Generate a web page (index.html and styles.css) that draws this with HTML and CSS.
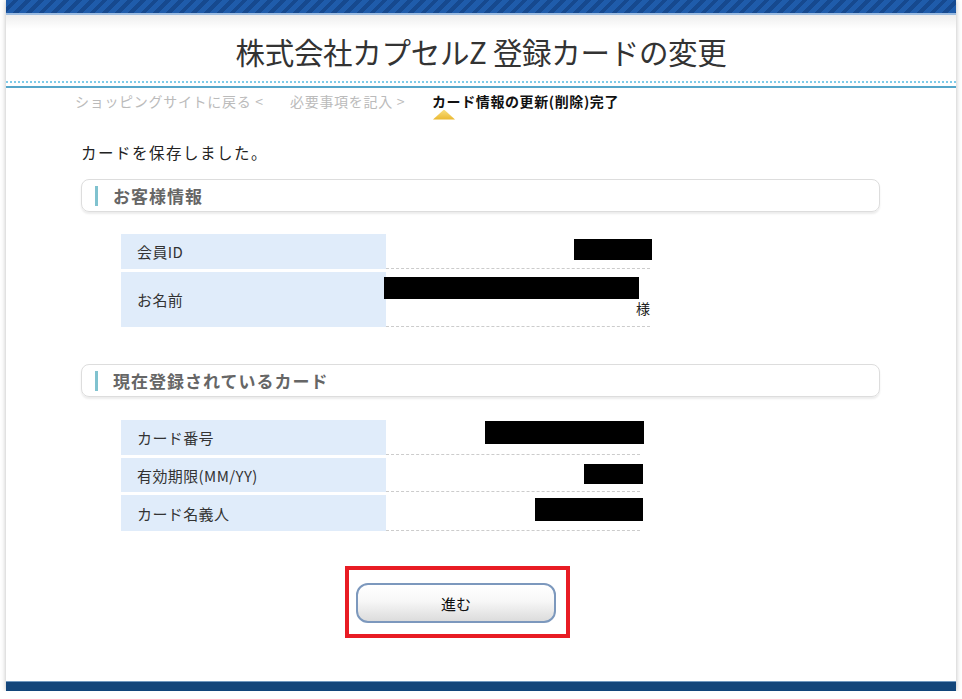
FILE: index.html
```html
<!DOCTYPE html>
<html lang="ja">
<head>
<meta charset="utf-8">
<title>登録カードの変更</title>
<link rel="stylesheet" href="styles.css">
</head>
<body>
<div class="page">
  <div class="stripe"></div>
  <header class="head">
    <h1 class="title">株式会社カプセルZ 登録カードの変更</h1>
  </header>
  <div class="rule-dotted"></div>
  <div class="rule-solid"></div>
  <nav class="crumbs">
    <span class="crumb crumb-1">ショッピングサイトに戻る &lt;</span>
    <span class="crumb crumb-2">必要事項を記入 &gt;</span>
    <span class="crumb crumb-active">カード情報の更新(削除)完了<i class="pointer"></i></span>
  </nav>
  <main class="content">
    <p class="notice">カードを保存しました。</p>

    <h2 class="sec-head"><span class="sec-bar"></span>お客様情報</h2>
    <table class="info info-1">
      <tr class="r-35">
        <th>会員ID</th>
        <td><span class="mask m-id"></span></td>
      </tr>
      <tr class="r-55">
        <th>お名前</th>
        <td class="name-cell"><span class="mask m-name"></span><span class="sama">様</span></td>
      </tr>
    </table>

    <h2 class="sec-head sec-2"><span class="sec-bar"></span>現在登録されているカード</h2>
    <table class="info info-2">
      <tr class="r-35">
        <th>カード番号</th>
        <td><span class="mask m-num"></span></td>
      </tr>
      <tr class="r-34">
        <th>有効期限(MM/YY)</th>
        <td><span class="mask m-exp"></span></td>
      </tr>
      <tr class="r-36">
        <th>カード名義人</th>
        <td><span class="mask m-holder"></span></td>
      </tr>
    </table>

    <div class="highlight">
      <button class="btn" type="button">進む</button>
    </div>
  </main>
  <footer class="foot"></footer>
</div>
</body>
</html>
```

FILE: styles.css
```css
html, body {
  margin: 0;
  padding: 0;
  background: #ffffff;
}

body {
  font-family: "Noto Sans CJK JP", "Noto Sans", "Liberation Sans", sans-serif;
  color: #333333;
}

.page {
  margin: 0 6px;
  height: 691px;
  display: flex;
  flex-direction: column;
  background: #ffffff;
  box-shadow: 0 0 5px rgba(0, 0, 0, 0.28);
  position: relative;
}

.stripe {
  height: 13px;
  background: repeating-linear-gradient(135deg, #1f5cab 0 5px, #16498f 5px 9px);
  border-bottom: 2px solid #9bbbe0;
  flex: none;
}

.head {
  height: 55px;
  background: linear-gradient(#eeeeee, #ffffff 14px);
  text-align: center;
  flex: none;
}

.title {
  margin: 0;
  padding-top: 17px;
  font-size: 29.5px;
  line-height: 38px;
  font-weight: normal;
  color: #333333;
  letter-spacing: -0.3px;
}

.rule-dotted {
  margin-top: 11px;
  height: 0;
  border-top: 2px dotted #7fcbe9;
  flex: none;
}

.rule-solid {
  margin-top: 3px;
  height: 2px;
  background: #55a6c9;
  flex: none;
}

.crumbs {
  display: flex;
  padding-left: 69px;
  height: 23px;
  align-items: center;
  font-size: 14px;
  line-height: 18px;
  flex: none;
  margin-top: 1px;
}

.crumb {
  color: #bbbbbb;
  white-space: nowrap;
  letter-spacing: 0.7px;
}

.crumb-1 { width: 215px; }
.crumb-2 { width: 142px; }

.crumb-active {
  color: #111111;
  font-weight: bold;
  position: relative;
  letter-spacing: 0.6px;
}

.pointer {
  position: absolute;
  left: 1px;
  top: 18px;
  width: 22px;
  height: 10px;
  background: linear-gradient(#f8de7c, #e9b62c);
  clip-path: polygon(50% 0, 100% 100%, 0 100%);
  filter: drop-shadow(0 1px 0 #c9c9c9);
}

.content {
  padding-left: 75px;
  flex: none;
}

.notice {
  margin: 30px 0 0;
  font-size: 15.5px;
  line-height: 20px;
  color: #222222;
  letter-spacing: 1.5px;
}

.sec-head {
  margin: 17px 0 0;
  width: 797px;
  height: 31px;
  border: 1px solid #dddddd;
  border-radius: 8px;
  box-shadow: 0 2px 2px rgba(0, 0, 0, 0.08);
  display: flex;
  align-items: center;
  font-size: 17px;
  font-weight: bold;
  color: #666666;
  letter-spacing: 1px;
  box-sizing: content-box;
}

.sec-bar {
  display: block;
  width: 3px;
  height: 20px;
  background: #80c2cf;
  margin-left: 13px;
  margin-right: 15px;
}

.sec-2 { margin-top: 34px; }

.info {
  margin: 19px 0 0 40px;
  border-collapse: separate;
  border-spacing: 0 3px;
  font-size: 15px;
  color: #333333;
  table-layout: fixed;
}

.info-1 { width: 529px; }
.info-2 { width: 519px; margin-top: 20px; }

.info th {
  width: 249px;
  background: #e0ecfa;
  text-align: left;
  font-weight: normal;
  padding: 0 0 0 16px;
  letter-spacing: 0.4px;
  white-space: nowrap;
}

.info td {
  text-align: right;
  vertical-align: top;
  padding: 0;
  border-bottom: 1px dashed #cccccc;
  white-space: nowrap;
}

.r-35 { height: 35px; }
.r-34 { height: 34px; }
.r-36 { height: 36px; }
.r-55 { height: 55px; }

.mask {
  display: inline-block;
  background: #000000;
  vertical-align: top;
}

.m-id { width: 78px; height: 21px; margin-top: 5px; margin-right: -2px; }
.m-name { width: 255px; height: 22px; margin-top: 5px; }
.m-num { width: 159px; height: 23px; margin-top: 1px; margin-right: -4px; }
.m-exp { width: 59px; height: 20px; margin-top: 6px; margin-right: -3px; }
.m-holder { width: 108px; height: 23px; margin-top: 3px; margin-right: -3px; }

.name-cell .mask {
  display: block;
  margin-left: -2px;
}

.sama {
  display: block;
  font-size: 14px;
  line-height: 16px;
  margin-top: 1px;
  color: #222222;
}

.highlight {
  margin: 32px 0 0 264px;
  width: 210px;
  border: 4px solid #e81c24;
  padding: 13px 0 0 7px;
  box-sizing: content-box;
  height: 51px;
}

.btn {
  width: 200px;
  height: 40px;
  border: 2px solid #7c98bd;
  border-radius: 12px;
  background: linear-gradient(#ffffff 0%, #f7f7f7 45%, #dcdcdc 100%);
  font-family: "Noto Sans CJK JP", "Noto Sans", sans-serif;
  font-size: 15px;
  color: #111111;
  box-shadow: inset 0 1px 0 #ffffff;
  padding: 0;
}

.foot {
  margin-top: auto;
  height: 9px;
  background: #12457a;
  border-top: 1px solid #6f97bf;
  flex: none;
}
```
